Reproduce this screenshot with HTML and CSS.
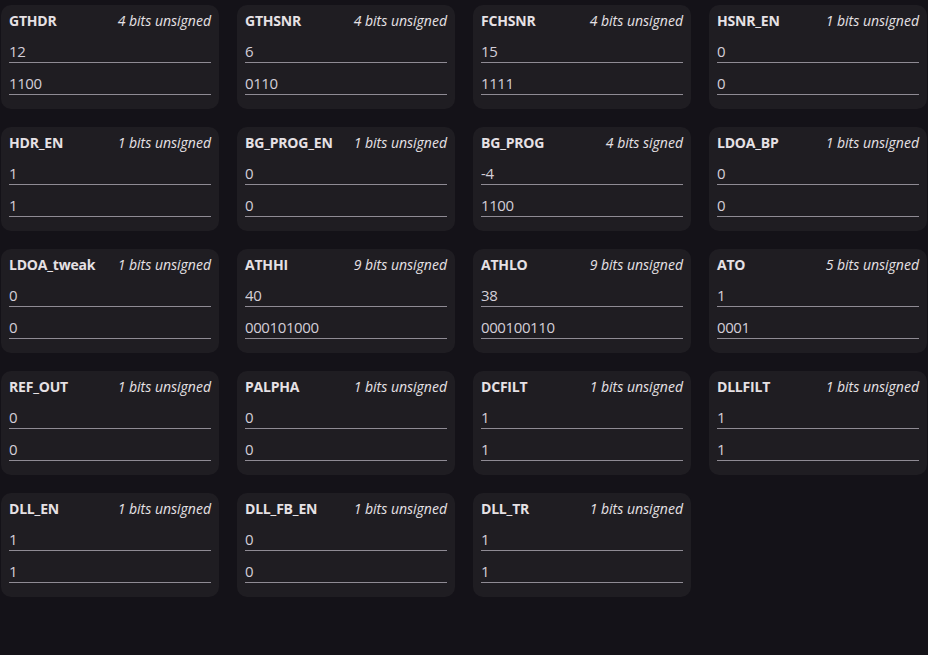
FILE: index.html
```html
<!DOCTYPE html>
<html lang="en">
<head>
<meta charset="utf-8">
<title>Registers</title>
<link rel="stylesheet" href="styles.css">
</head>
<body>
<div class="grid">
  <div class="card"><div class="head"><span class="name">GTHDR</span><span class="meta">4 bits unsigned</span></div><input class="field" value="12"><input class="field" value="1100"></div>
  <div class="card"><div class="head"><span class="name">GTHSNR</span><span class="meta">4 bits unsigned</span></div><input class="field" value="6"><input class="field" value="0110"></div>
  <div class="card"><div class="head"><span class="name">FCHSNR</span><span class="meta">4 bits unsigned</span></div><input class="field" value="15"><input class="field" value="1111"></div>
  <div class="card"><div class="head"><span class="name">HSNR_EN</span><span class="meta">1 bits unsigned</span></div><input class="field" value="0"><input class="field" value="0"></div>

  <div class="card"><div class="head"><span class="name">HDR_EN</span><span class="meta">1 bits unsigned</span></div><input class="field" value="1"><input class="field" value="1"></div>
  <div class="card"><div class="head"><span class="name">BG_PROG_EN</span><span class="meta">1 bits unsigned</span></div><input class="field" value="0"><input class="field" value="0"></div>
  <div class="card"><div class="head"><span class="name">BG_PROG</span><span class="meta">4 bits signed</span></div><input class="field" value="-4"><input class="field" value="1100"></div>
  <div class="card"><div class="head"><span class="name">LDOA_BP</span><span class="meta">1 bits unsigned</span></div><input class="field" value="0"><input class="field" value="0"></div>

  <div class="card"><div class="head"><span class="name">LDOA_tweak</span><span class="meta">1 bits unsigned</span></div><input class="field" value="0"><input class="field" value="0"></div>
  <div class="card"><div class="head"><span class="name">ATHHI</span><span class="meta">9 bits unsigned</span></div><input class="field" value="40"><input class="field" value="000101000"></div>
  <div class="card"><div class="head"><span class="name">ATHLO</span><span class="meta">9 bits unsigned</span></div><input class="field" value="38"><input class="field" value="000100110"></div>
  <div class="card"><div class="head"><span class="name">ATO</span><span class="meta">5 bits unsigned</span></div><input class="field" value="1"><input class="field" value="0001"></div>

  <div class="card"><div class="head"><span class="name">REF_OUT</span><span class="meta">1 bits unsigned</span></div><input class="field" value="0"><input class="field" value="0"></div>
  <div class="card"><div class="head"><span class="name">PALPHA</span><span class="meta">1 bits unsigned</span></div><input class="field" value="0"><input class="field" value="0"></div>
  <div class="card"><div class="head"><span class="name">DCFILT</span><span class="meta">1 bits unsigned</span></div><input class="field" value="1"><input class="field" value="1"></div>
  <div class="card"><div class="head"><span class="name">DLLFILT</span><span class="meta">1 bits unsigned</span></div><input class="field" value="1"><input class="field" value="1"></div>

  <div class="card"><div class="head"><span class="name">DLL_EN</span><span class="meta">1 bits unsigned</span></div><input class="field" value="1"><input class="field" value="1"></div>
  <div class="card"><div class="head"><span class="name">DLL_FB_EN</span><span class="meta">1 bits unsigned</span></div><input class="field" value="0"><input class="field" value="0"></div>
  <div class="card"><div class="head"><span class="name">DLL_TR</span><span class="meta">1 bits unsigned</span></div><input class="field" value="1"><input class="field" value="1"></div>
</div>
</body>
</html>
```
FILE: styles.css
```css
html, body {
  margin: 0;
  padding: 0;
  background: #141218;
  height: 100%;
}
body {
  font-family: "Open Sans", "Noto Sans", sans-serif;
  color: #e6e1e5;
}
.grid {
  display: grid;
  grid-template-columns: repeat(4, 218px);
  grid-auto-rows: 104px;
  gap: 18px;
  padding: 5px 1px;
}
.card {
  background: #1f1d22;
  border-radius: 10px;
  padding: 8px 8px 0 8px;
  display: flex;
  flex-direction: column;
  box-sizing: border-box;
}
.head {
  display: flex;
  justify-content: space-between;
  align-items: center;
  height: 14px;
  margin-bottom: 11px;
}
.name {
  font-weight: 700;
  font-size: 14px;
  letter-spacing: -0.2px;
  color: #e6e1e5;
}
.meta {
  font-style: italic;
  font-size: 14px;
  color: #e6e1e5;
}
.field {
  display: block;
  height: 25px;
  box-sizing: border-box;
  width: 100%;
  margin: 0 0 7px 0;
  padding: 2px 0 0 0;
  border: 0;
  border-bottom: 1px solid #8f8b94;
  background: transparent;
  color: #d3ced8;
  font-family: "Open Sans", "Noto Sans", sans-serif;
  font-weight: 400;
  font-size: 15px;
  letter-spacing: -0.4px;
  line-height: 20px;
  outline: none;
}
```
